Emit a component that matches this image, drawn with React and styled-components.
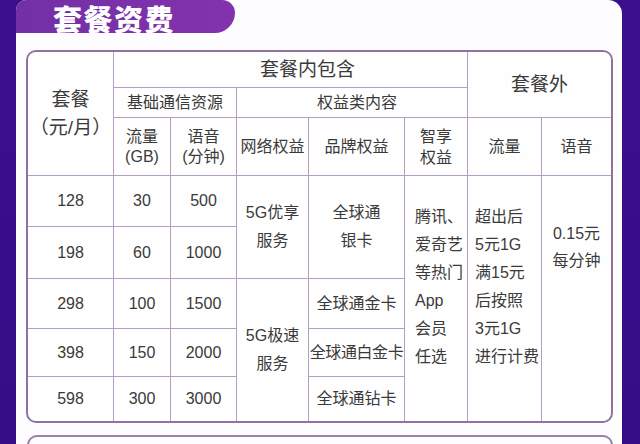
import React from "react";
import styled, { createGlobalStyle } from "styled-components";

const Global = createGlobalStyle`
  html, body { margin: 0; padding: 0; background: #3b0f8c; }
  #root { width: 640px; height: 444px; overflow: hidden; }
`;

const Page = styled.div`
  display: flex;
  width: 640px;
  height: 444px;
  background: #3a0e8b;
  font-family: "Liberation Sans", "Noto Sans CJK SC", sans-serif;
  color: #3a3a3a;
`;

const Strip = styled.div`
  flex: 0 0 ${(p) => p.$w}px;
  background: linear-gradient(180deg, #3c0f8f, #360c86);
`;

const Panel = styled.div`
  flex: 1;
  background: #fdfcfe;
  border-radius: 10px 14px 0 0;
  overflow: hidden;
  display: flex;
  flex-direction: column;
  align-items: flex-start;
  & > * { flex-shrink: 0; }
`;

const Tab = styled.div`
  box-sizing: border-box;
  width: 219px;
  height: 33px;
  padding: 3px 0 0 37px;
  background: linear-gradient(90deg, #7330a6, #8232ad);
  border-radius: 0 14px 22px 0;
  display: flex;
  align-items: center;
`;

const Title = styled.h1`
  margin: 0;
  font-family: "Noto Sans CJK SC", sans-serif;
  font-weight: 900;
  font-size: 29px;
  line-height: 30px;
  letter-spacing: 1.5px;
  color: #ffffff;
`;

const Table = styled.div`
  margin: 17px 0 0 10px;
  width: 583px;
  border: 2px solid #8e739c;
  border-radius: 10px;
  overflow: hidden;
  display: grid;
  grid-template-columns: 85px 56px 65px 71px 95px 62px 73px 69px;
  grid-template-rows: 35px 29px 57px 50px 51px 49px 47px 44px;
  gap: 1px;
  background: #b29fc2;
`;

const Cell = styled.div`
  grid-column: ${(p) => p.$c} / span ${(p) => p.$cs || 1};
  grid-row: ${(p) => p.$r} / span ${(p) => p.$rs || 1};
  background: #fefefe;
  display: flex;
  flex-direction: column;
  justify-content: ${(p) => (p.$top ? "flex-start" : "center")};
  align-items: ${(p) => (p.$left ? "flex-start" : "center")};
  padding-top: ${(p) => p.$pt || 0}px;
  padding-left: ${(p) => p.$pl || 0}px;
  font-size: ${(p) => p.$size || 16}px;
  line-height: ${(p) => p.$lh || 28}px;
  text-align: ${(p) => (p.$left ? "left" : "center")};
  white-space: nowrap;
  letter-spacing: ${(p) => p.$ls || 0}px;
`;

const BottomBox = styled.div`
  margin: 12px 0 0 11px;
  width: 582px;
  height: 40px;
  border: 2px solid #9a82ab;
  border-radius: 10px;
`;

const prices = ["128", "198", "298", "398", "598"];
const data = ["30", "60", "100", "150", "300"];
const voice = ["500", "1000", "1500", "2000", "3000"];

export default function App() {
  return (
    <>
      <Global />
      <Page>
        <Strip $w={16} />
        <Panel>
          <Tab>
            <Title>套餐资费</Title>
          </Tab>
          <Table>
            <Cell $c={1} $r={1} $rs={3} $size={19}>
              <span>套餐</span>
              <span>（元/月）</span>
            </Cell>
            <Cell $c={2} $r={1} $cs={5} $size={19} $pl={34}>套餐内包含</Cell>
            <Cell $c={7} $r={1} $cs={2} $rs={2} $size={19}>套餐外</Cell>
            <Cell $c={2} $r={2} $cs={2}>基础通信资源</Cell>
            <Cell $c={4} $r={2} $cs={3} $pl={10}>权益类内容</Cell>

            <Cell $c={2} $r={3} $lh={20}>
              <span>流量</span>
              <span>(GB)</span>
            </Cell>
            <Cell $c={3} $r={3} $lh={20}>
              <span>语音</span>
              <span>(分钟)</span>
            </Cell>
            <Cell $c={4} $r={3}>网络权益</Cell>
            <Cell $c={5} $r={3}>品牌权益</Cell>
            <Cell $c={6} $r={3} $lh={21}>
              <span>智享</span>
              <span>权益</span>
            </Cell>
            <Cell $c={7} $r={3}>流量</Cell>
            <Cell $c={8} $r={3}>语音</Cell>

            {prices.map((v, i) => (
              <Cell key={"p" + v} $c={1} $r={4 + i}>{v}</Cell>
            ))}
            {data.map((v, i) => (
              <Cell key={"d" + v} $c={2} $r={4 + i}>{v}</Cell>
            ))}
            {voice.map((v, i) => (
              <Cell key={"v" + v} $c={3} $r={4 + i}>{v}</Cell>
            ))}

            <Cell $c={4} $r={4} $rs={2}>
              <span>5G优享</span>
              <span>服务</span>
            </Cell>
            <Cell $c={4} $r={6} $rs={3}>
              <span>5G极速</span>
              <span>服务</span>
            </Cell>

            <Cell $c={5} $r={4} $rs={2}>
              <span>全球通</span>
              <span>银卡</span>
            </Cell>
            <Cell $c={5} $r={6}>全球通金卡</Cell>
            <Cell $c={5} $r={7} $ls={-0.4}>全球通白金卡</Cell>
            <Cell $c={5} $r={8}>全球通钻卡</Cell>

            <Cell $c={6} $r={4} $rs={5} $top $left $pt={27} $pl={10}>
              <span>腾讯、</span>
              <span>爱奇艺</span>
              <span>等热门</span>
              <span>App</span>
              <span>会员</span>
              <span>任选</span>
            </Cell>
            <Cell $c={7} $r={4} $rs={5} $top $left $pt={27} $pl={7}>
              <span>超出后</span>
              <span>5元1G</span>
              <span>满15元</span>
              <span>后按照</span>
              <span>3元1G</span>
              <span>进行计费</span>
            </Cell>
            <Cell $c={8} $r={4} $rs={5} $top $pt={44} $lh={27}>
              <span>0.15元</span>
              <span>每分钟</span>
            </Cell>
          </Table>
          <BottomBox />
        </Panel>
        <Strip $w={18} />
      </Page>
    </>
  );
}
